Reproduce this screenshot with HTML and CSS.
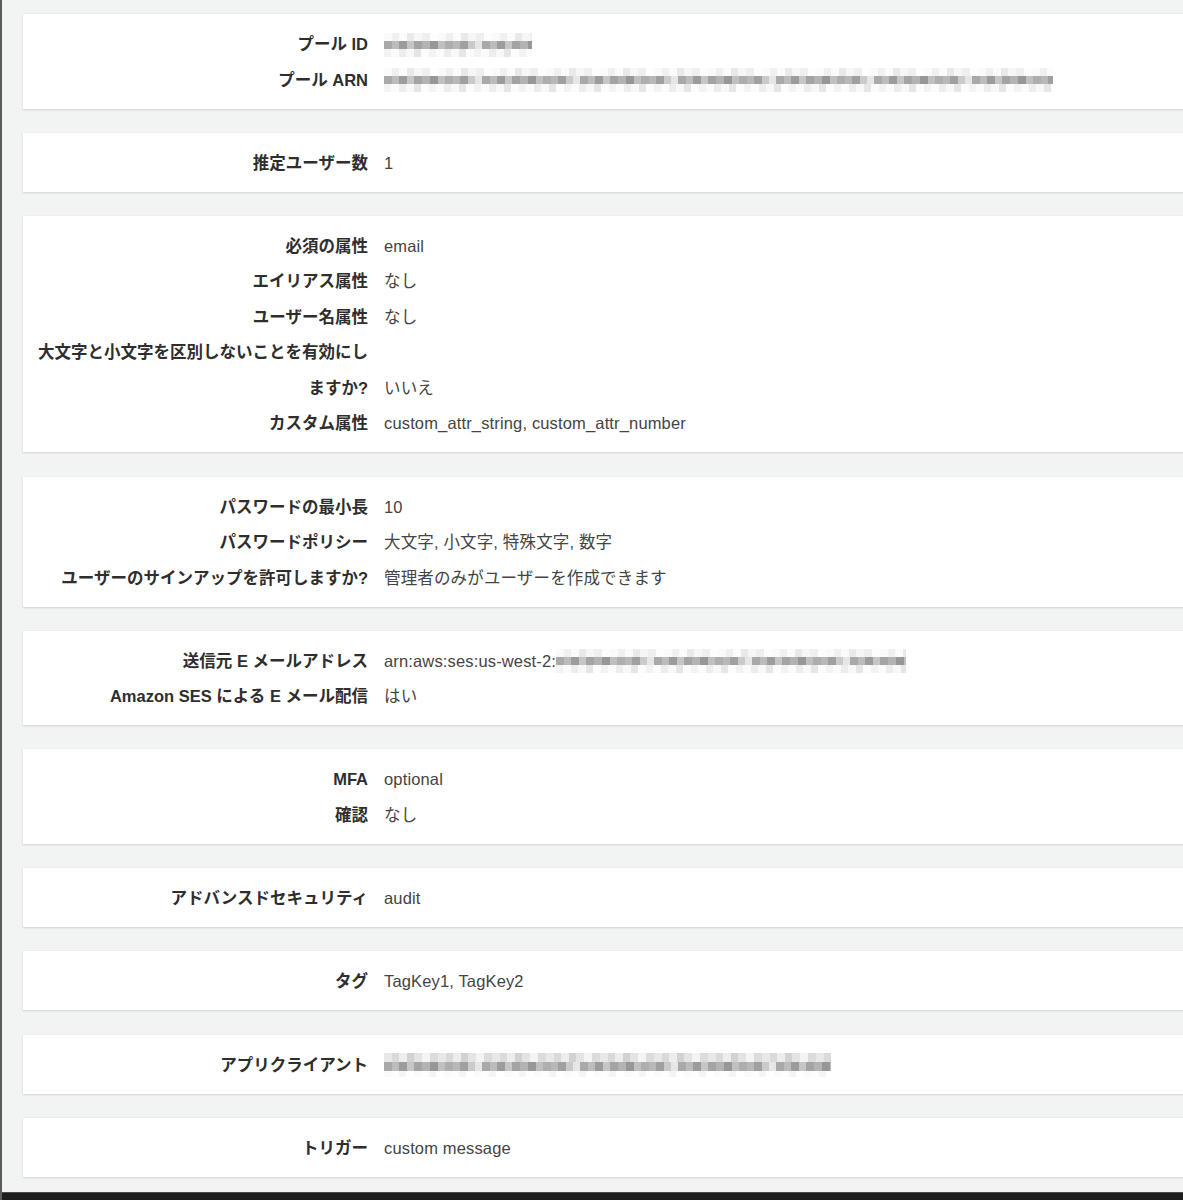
FILE: index.html
```html
<!DOCTYPE html>
<html lang="ja">
<head>
<meta charset="utf-8">
<title>ユーザープールの詳細</title>
<link rel="stylesheet" href="styles.css">
</head>
<body>
<div class="page">
  <main class="content">
    <section class="card">
      <dl class="rows">
        <dt>プール ID</dt><dd><span class="mosaic m-id" aria-label="非表示"></span></dd>
        <dt>プール ARN</dt><dd><span class="mosaic m-arn" aria-label="非表示"></span></dd>
      </dl>
    </section>
    <section class="card">
      <dl class="rows">
        <dt>推定ユーザー数</dt><dd>1</dd>
      </dl>
    </section>
    <section class="card">
      <dl class="rows">
        <dt>必須の属性</dt><dd>email</dd>
        <dt>エイリアス属性</dt><dd>なし</dd>
        <dt>ユーザー名属性</dt><dd>なし</dd>
        <dt>大文字と小文字を区別しないことを有効にしますか?</dt><dd class="bottom">いいえ</dd>
        <dt>カスタム属性</dt><dd>custom_attr_string, custom_attr_number</dd>
      </dl>
    </section>
    <section class="card">
      <dl class="rows">
        <dt>パスワードの最小長</dt><dd>10</dd>
        <dt>パスワードポリシー</dt><dd>大文字, 小文字, 特殊文字, 数字</dd>
        <dt>ユーザーのサインアップを許可しますか?</dt><dd>管理者のみがユーザーを作成できます</dd>
      </dl>
    </section>
    <section class="card">
      <dl class="rows">
        <dt>送信元 E メールアドレス</dt><dd>arn:aws:ses:us-west-2:<span class="mosaic m-email" aria-label="非表示"></span></dd>
        <dt>Amazon SES による E メール配信</dt><dd>はい</dd>
      </dl>
    </section>
    <section class="card">
      <dl class="rows">
        <dt>MFA</dt><dd>optional</dd>
        <dt>確認</dt><dd>なし</dd>
      </dl>
    </section>
    <section class="card">
      <dl class="rows">
        <dt>アドバンスドセキュリティ</dt><dd>audit</dd>
      </dl>
    </section>
    <section class="card">
      <dl class="rows">
        <dt>タグ</dt><dd>TagKey1, TagKey2</dd>
      </dl>
    </section>
    <section class="card">
      <dl class="rows">
        <dt>アプリクライアント</dt><dd><span class="mosaic m-app" aria-label="非表示"></span></dd>
      </dl>
    </section>
    <section class="card">
      <dl class="rows">
        <dt>トリガー</dt><dd>custom message</dd>
      </dl>
    </section>
  </main>
  <div class="bottombar"></div>
</div>
</body>
</html>
```

FILE: styles.css
```css
html, body {
  margin: 0;
  padding: 0;
  height: 1200px;
  overflow: hidden;
  background: #f2f3f3;
}

.page {
  height: 1200px;
  display: flex;
  flex-direction: column;
  border-left: 2px solid #5c5c5c;
  box-sizing: border-box;
  font-family: "Liberation Sans", "Noto Sans CJK JP", sans-serif;
}

.content {
  flex: 1;
  overflow: hidden;
  display: flex;
  flex-direction: column;
  gap: 24.2px;
  padding: 14px 0 0 21px;
}

.card {
  background: #fff;
  margin-right: -20px;
  padding: 13px 0 10.5px;
  box-shadow: 0 1px 2px rgba(0, 0, 0, 0.13), 0 0 1px rgba(0, 0, 0, 0.08);
}

.rows {
  display: grid;
  grid-template-columns: 345px 1fr;
  column-gap: 16px;
  margin: 0;
  line-height: 35.5px;
}

.rows dt {
  text-align: right;
  font-weight: bold;
  font-size: 16.5px;
  color: #2e2e2e;
}

.rows dd {
  margin: 0;
  font-size: 16.5px;
  letter-spacing: 0.15px;
  color: #444;
  white-space: nowrap;
}

.rows dd.bottom {
  align-self: end;
}

.mosaic {
  display: inline-block;
  height: 24px;
  vertical-align: middle;
  position: relative;
  top: -1px;
  background:
    repeating-linear-gradient(90deg, #fafafa 0 8px, #f0f0f0 8px 15px, #fbfbfb 15px 23px, #e9e9e9 23px 30px, #f6f6f6 30px 38px, #efefef 38px 46px, #fdfdfd 46px 54px) 0 0 / 100% 8px no-repeat,
    repeating-linear-gradient(90deg, #a9a9a9 0 8px, #bcbcbc 8px 15px, #9c9c9c 15px 23px, #c6c6c6 23px 30px, #a4a4a4 30px 38px, #b3b3b3 38px 46px, #979797 46px 54px, #c0c0c0 54px 61px, #aeaeae 61px 69px, #b8b8b8 69px 76px, #a0a0a0 76px 84px, #cacaca 84px 91px, #e6e6e6 91px 98px) 0 8px / 100% 8px no-repeat,
    repeating-linear-gradient(90deg, #f3f3f3 0 7px, #fbfbfb 7px 15px, #ededed 15px 22px, #f8f8f8 22px 30px, #e6e6e6 30px 37px, #fcfcfc 37px 45px) 0 16px / 100% 8px no-repeat;
}

.m-id { width: 148px; }
.m-arn { width: 669px; }
.m-email { width: 350px; }
.m-app {
  width: 447px;
  background:
    repeating-linear-gradient(90deg, #e8e8e8 0 8px, #dadada 8px 15px, #ededed 15px 23px, #d2d2d2 23px 30px, #e4e4e4 30px 38px, #f4f4f4 38px 46px, #dcdcdc 46px 54px) 0 0 / 100% 9px no-repeat,
    repeating-linear-gradient(90deg, #a9a9a9 0 8px, #bcbcbc 8px 15px, #9c9c9c 15px 23px, #c6c6c6 23px 30px, #a4a4a4 30px 38px, #b3b3b3 38px 46px, #979797 46px 54px, #c0c0c0 54px 61px, #aeaeae 61px 69px, #b8b8b8 69px 76px, #a0a0a0 76px 84px, #cacaca 84px 91px, #e6e6e6 91px 98px) 0 9px / 100% 9px no-repeat,
    repeating-linear-gradient(90deg, #fafafa 0 7px, #fdfdfd 7px 15px, #f5f5f5 15px 22px, #ffffff 22px 30px) 0 18px / 100% 6px no-repeat;
}

.bottombar {
  height: 7px;
  flex: none;
  background: #1d1d1d;
  border-top: 1px solid #4a4a4a;
}
```
